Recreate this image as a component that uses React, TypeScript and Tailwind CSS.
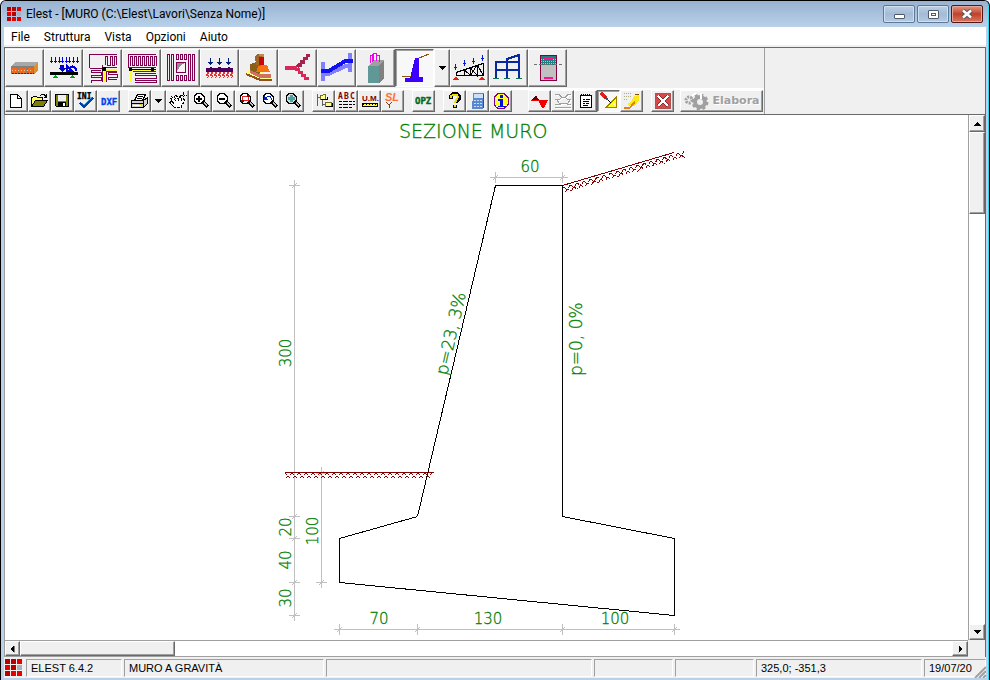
import React from "react";

type P = { children?: React.ReactNode };

/* ---------- icon frames ---------- */
const Big = ({ children }: P) => (
  <svg width="34" height="34" viewBox="0 0 34 34" shapeRendering="crispEdges" fill="none" aria-hidden="true" className="shrink-0">
    {children}
  </svg>
);
const Sm = ({ children }: P) => (
  <svg width="18" height="18" viewBox="0 0 18 18" shapeRendering="crispEdges" fill="none" aria-hidden="true" className="shrink-0">
    {children}
  </svg>
);

const ICON_FONT = "'Liberation Sans', Arial, sans-serif";
const MAROON = "#800050";

/* ---------- structure icons ---------- */
const Brick = () => (
  <Big>
    <path d="M3 15l5-4h22l-4 4z" fill="#a8a8a8" />
    <path d="M3 15h23v8H3z" fill="#808080" />
    <path d="M26 15l4-4v8l-4 4z" fill="#d89030" />
    <path d="M4 17h5v5H4zM11 17h7v5h-7zM20 17h5v5h-5z" fill="#f06818" />
    <path d="M4 22.500h22" stroke="#303060" strokeDasharray="2 1" />
    <path d="M4 19.500h21" stroke="#ffc890" strokeDasharray="1 2" />
  </Big>
);
const Beam = () => (
  <Big>
    {[4, 8, 12, 15, 19, 22, 26, 30].map((x) => (
      <path key={x} d={`M${x}.5 6v6M${x - 1} 10.500h3`} stroke="#0000f0" />
    ))}
    <path d="M13 14h4v3h2l-4 4-4-4h2z" fill="#0000d0" />
    <path d="M20 15v5h5zM22 18c2-4 7-3 7 2" stroke="#0000d0" strokeWidth="2" />
    <path d="M3 21h28v3H3z" fill="#000" />
    <path d="M8 24l3 3H5zM25 24l3 3h-6z" fill="#00a020" />
  </Big>
);
const Solaio1 = () => (
  <Big>
    <path d="M3.500 17V3.500H31M3.500 17.500H16.500V14M19.500 14V5.500h2V14h2.500V5.500h2V14h2.500V5.500h2V14" stroke={MAROON} />
    <path d="M19 5.500h3M24 14.500h-3M24 5.500h3" stroke={MAROON} />
    <path d="M15 19.500H5.500v2H15v3H5.500v2H15v3H5.500v2M31 21.500h-9v2h9v3h-9v2h9" stroke={MAROON} />
    <path d="M31 16.500H16.500V31M31 20.500H20.500V31" stroke={MAROON} />
    <path d="M18.500 31V18.500H31" stroke="#ffff20" strokeWidth="2" />
    <path d="M16 16h4v4h-4z" fill="#000" />
  </Big>
);
const Solaio2 = () => (
  <Big>
    <path d="M3.500 16V3.500H31" stroke={MAROON} />
    <path d="M5.500 14.500V5.500h2v9h2v-9h2v9h2v-9h2v9h2v-9h2v9h2v-9h2v9h2v-9h2v9h2v-9h2v9" stroke={MAROON} />
    <path d="M31 22.500H10.500v2H31v2.500H10.500v2H31v2H10M3 16.500h28M8 20.500h23" stroke={MAROON} />
    <path d="M6 31V18.500h25" stroke="#ffff20" strokeWidth="2" />
    <path d="M6 18.500h25" stroke="#000" />
    <path d="M4 17h3v3H4zM26 17h3v3h-3z" fill="#000" />
  </Big>
);
const Platea = () => (
  <Big>
    <path d="M3.500 3.500h2v26h-2zM7.500 3.500h2v26h-2zM24.500 3.500h2v26h-2zM28.500 3.500h2v26h-2zM12.500 3.500h2v5h-2zM16.500 3.500h2v5h-2zM20.500 3.500h2v5h-2zM12.500 24.500h2v5h-2zM16.500 24.500h2v5h-2zM20.500 24.500h2v5h-2z" stroke={MAROON} />
    <path d="M12.500 11.500h9v10h-9z" fill="#f4f4f4" stroke={MAROON} />
    <path d="M13 20v-8h8l-4 2-2 3z" fill="#909090" />
  </Big>
);
const Winkler = () => (
  <Big>
    <path d="M7.500 7v7M16.500 7v7M25.500 7v7M5 11.500h5M14 11.500h5M23 11.500h5M6 12.500h3M15 12.500h3M24 12.500h3" stroke="#002080" />
    <path d="M3 17h27v4H3zM7 16h2v1H7zM15 16h3v1h-3zM25 16h2v1h-2z" fill="#480060" />
    {[4, 8, 12, 16, 20, 24, 28].map((x) => (
      <path key={x} d={`M${x} 21l2 1-3 2 3 1-2 2`} stroke="#f03030" />
    ))}
  </Big>
);
const Plinto = () => (
  <Big>
    <path d="M4 22l5-6 21 10v4H19z" fill="#ffff90" />
    <path d="M4 22v2l14 6h12v-2H19z" fill="#905020" />
    <path d="M8 19v3l10 5h11v-4H19z" fill="#d07060" />
    <path d="M8 13l7-2 4 9-2 3-9-4z" fill="#886018" />
    <path d="M14 21l3-7h8l3 7z" fill="#f87010" />
    <path d="M13 5l3-2h6v2l-3 3v7l-5-1z" fill="#a06828" />
    <path d="M17 6h5v8h-5z" fill="#c80808" />
    <path d="M17 5V3h5v3z" fill="#b89050" />
  </Big>
);
const Scala = () => (
  <Big>
    <path d="M4 15h12v2h3v3h3v3h3v3h3v3h-5v-3h-3v-3h-3v-3h-3v-1H4z" fill="#d82858" />
    <path d="M15 15l2-3h2V9h3V6h3V3h4v3h-2v3h-3v4h-3v3h-3v2z" fill="#a82050" />
  </Big>
);
const TraveInclinata = () => (
  <Big>
    <path d="M1 11h4v19H1zM28 2h4v19h-4z" fill="#8080ff" />
    <path d="M5 21v4h4l17-8h3v-4h-4L9 21z" fill="#8080ff" />
    <path d="M1 18h7L25 8h8v4h-7L9 22H1z" fill="#1010f0" />
  </Big>
);
const Pilastro = () => (
  <Big>
    <path d="M9 15h11v17H9z" fill="#609898" />
    <path d="M9 15l6-6h10l-5 6z" fill="#a0a0a0" />
    <path d="M20 15l5-6v18l-5 5z" fill="#808080" />
    <path d="M11.500 12V4h2V3M14.500 10V2h3v8M17.500 4h3v7M13.500 5v6" stroke="#f000f0" />
  </Big>
);
const Muro = () => (
  <Big>
    <path d="M17 7h4v19h4v5H7v-4h5z" fill="#3c00ff" />
    <path d="M4 25.500h9M21 7l10-4" stroke="#905010" />
  </Big>
);
const Reticolare = () => (
  <Big>
    <path d="M3 24.500h27M3 21.500L30 12.500v12M3.500 21v4M11.500 25v-6l6 5.500V17l7 8V14l6 11M17 25l7-11" stroke="#000" />
    <path d="M3 25l3 4H0zM29 25l3 4h-6z" fill="#e82010" />
    <path d="M2.500 13v6M11.500 9v6M20.500 7v6M29.500 4v6M1 16.500h3M10 12.500h3M19 10.500h3M28 7.500h3" stroke="#0018e0" />
  </Big>
);
const Telaio = () => (
  <Big>
    <path d="M4 27V11h23M4 19h23M15 27V8L27 4v23" stroke="#0828a0" strokeWidth="2" />
    <path d="M1 27.500h6M12 27.500h6M24 27.500h6" stroke="#107050" />
  </Big>
);
const Sezione = () => (
  <Big>
    <path d="M9.500 4.500h16v25h-16z" fill="#c0c0c0" stroke="#800040" />
    <path d="M10 5h15v9H10z" fill="#208080" />
    <path d="M10 8.500h15M10 10.500h15M10 12.500h15" stroke="#a0d0d0" strokeDasharray="1 1" />
    <path d="M13 7h9v2h-9zM13 26h9v2h-9z" fill="#ff1090" />
    <path d="M3 13.500h30" stroke="#707070" strokeDasharray="3 2" />
  </Big>
);

/* ---------- small icons ---------- */
const Doc = () => (
  <Sm>
    <path d="M2.500 2.500h7l4 4v9h-11z" fill="#fff" stroke="#000" />
    <path d="M9.500 2.500v4h4" stroke="#000" />
  </Sm>
);
const Open = () => (
  <Sm>
    <path d="M.5 14.500v-9h1l1-1h3l1 1h5v3" fill="#ffff60" stroke="#000" />
    <path d="M.5 14.500l4-6h12l-4 6z" fill="#808000" stroke="#000" />
    <path d="M9 3.500l2-1h2l2 2M15.500 2v3h-3" stroke="#000" />
  </Sm>
);
const Save = () => (
  <Sm>
    <path d="M1.500 2.500h13v12h-12l-1-1z" fill="#808000" stroke="#000" />
    <path d="M4 3h8v6H4z" fill="#f0f0f0" />
    <path d="M4 10h8v5H4z" fill="#000" />
    <path d="M9 11h2v3H9z" fill="#fff" />
  </Sm>
);
const Ini = () => (
  <Sm>
    <text x="0" y="7" fontSize="8" fontWeight="700" fill="#000" stroke="#000" strokeWidth=".3" fontFamily="DejaVu Sans Mono, monospace">INI</text>
    <path d="M3 11l4 4 9-9" stroke="#0040a0" strokeWidth="2" />
    <path d="M5 11l2 2 8-8" stroke="#40a0e0" strokeWidth="1" />
  </Sm>
);
const Dxf = () => (
  <Sm>
    <text x="1" y="13" fontSize="9" fontWeight="700" fill="#0040f0" stroke="#0040f0" strokeWidth=".3" fontFamily="DejaVu Sans Mono, monospace">DXF</text>
  </Sm>
);
const Print = () => (
  <Sm>
    <path d="M.5 8.500h12l4-3v6l-4 4H.5z" fill="#d0d0d0" stroke="#000" />
    <path d="M3.500 8.500l3-6h8l-3 6z" fill="#fff" stroke="#000" />
    <path d="M1 11.500h11M7 4.500h5M6 6.500h5M12.500 9v6" stroke="#000" />
    <path d="M2 13h8v1H2z" fill="#fff" />
    <path d="M8 12h2v1H8z" fill="#e0d000" />
  </Sm>
);
const Hand = () => (
  <Sm>
    <path d="M5.500 15.500l-4-4-1-2h2l2 2-3-6 1-1 4 4-1-5h2l2 4 1-3 2 1v3l3-1v2l-3 4v2z" fill="#fff" stroke="#000" strokeDasharray="3 1" />
    <path d="M14.500 0v8M11 3.500h7" stroke="#000" strokeDasharray="3 1 1 1" />
  </Sm>
);
const Lens = ({ children, fill = "#fff" }: P & { fill?: string }) => (
  <Sm>
    <path d="M5 1.500h4l3 3v4l-3 3H5l-3-3v-4z" fill={fill} stroke="#000" />
    {children}
    <path d="M11 10l5 5" stroke="#000" strokeWidth="3" />
    <path d="M12 10.500l3 3" stroke="#c0c0c0" />
  </Sm>
);
const ZoomIn = () => <Lens><path d="M4 6.500h6M7 4v6" stroke="#000" strokeWidth="2" /></Lens>;
const ZoomOut = () => <Lens><path d="M4 7h6" stroke="#000" strokeWidth="2" /></Lens>;
const ZoomWin = () => (
  <Lens>
    <path d="M4.500 4.500h6v4h-6z" stroke="#e02020" />
    <path d="M3 8h3v2H3zM9 3h3v2H9z" fill="#900000" />
  </Lens>
);
const ZoomPrev = () => (
  <Lens>
    <path d="M5 6l2-2h2l2 4" stroke="#0020b0" />
    <path d="M3 4v4h4z" fill="#0020b0" />
  </Lens>
);
const ZoomAll = () => <Lens fill="#d0e0e0"><path d="M7 3v7M3.500 6.500h7" stroke="#50a0a0" strokeWidth="3" /></Lens>;
const Tree = () => (
  <Sm>
    <path d="M2.500 2v12M2 5.500h4M7.500 8v6M8 12.500h3" stroke="#606060" />
    <path d="M5.500 3.500h2l1-1h2v5h-5zM10.500 10.500h6v4h-6z" fill="#ffff90" stroke="#707010" />
    <path d="M6 7.500h6v-3M11 14.500h6v-4" stroke="#000" />
  </Sm>
);
const Abc = () => (
  <Sm>
    {["A", "B", "C"].map((c, i) => (
      <text key={c} x={i * 6} y="7" fontSize="8" fontWeight="700" fill="#800000" fontFamily="DejaVu Sans Mono, monospace">{c}</text>
    ))}
    <path d="M1 9.500h16M1 12.500h16M1 15.500h14" stroke="#000" strokeDasharray="3 1 5 1" />
  </Sm>
);
const Um = () => (
  <Sm>
    <text x="1" y="9" fontSize="8" fontWeight="700" fill="#800000" fontFamily={ICON_FONT}>U.M.</text>
    <path d="M1.500 11.500h15v3h-15z" fill="#ffff20" stroke="#000" />
    <path d="M2 12.500h14" stroke="#000" strokeDasharray="1 2" />
  </Sm>
);
const Sl = () => (
  <Sm>
    <text x="1" y="9" fontSize="11" fontWeight="700" fontStyle="italic" fill="#ff7038" fontFamily={ICON_FONT}>SL</text>
    <path d="M2 10l3 3 3-3M5 13v3" stroke="#804020" />
  </Sm>
);
const Opz = () => (
  <Sm>
    <text x="0" y="12" fontSize="9" fontWeight="700" fill="#006820" fontFamily="DejaVu Sans Mono, monospace" stroke="#006820" strokeWidth=".4">OPZ</text>
  </Sm>
);
const Help = () => (
  <Sm>
    <path d="M5 7V4l2-2h4l2 2v3l-3 3v1M9 13v3" stroke="#000" strokeWidth="4" />
    <path d="M5 6V4l2-1h4l1 2-1 2-2 3v1M9 13v2" stroke="#f0e000" strokeWidth="2" />
  </Sm>
);
const Calc = () => (
  <Sm>
    <path d="M4 1h11v15l-2 1H3z" fill="#5888d0" />
    <path d="M5 2h9v4H5z" fill="#c8e0f8" />
    <path d="M5 8.500h8M5 11.500h8M5 14.500h8" stroke="#c8dcf4" strokeDasharray="2 1" />
    <path d="M14.500 2v14" stroke="#2850a0" />
  </Sm>
);
const Info = () => (
  <Sm>
    <path d="M6 1.500h6l4 4v7l-4 4H6l-4-4v-7z" fill="#ffff20" stroke="#800080" />
    <path d="M5 3h7M3 6h3M12 13h3M4 14h3" stroke="#fff" />
    <path d="M8 3h3v3H8zM6 7h5v7h2v1H6v-1h2V9H6z" fill="#0010e0" />
  </Sm>
);
const Diagram = () => (
  <Sm>
    <path d="M1 8l4-5 3 5z" fill="#600000" />
    <path d="M7 8h10l-4 8h-2z" fill="#f00000" />
    <path d="M0 8.500h17" stroke="#f00000" />
  </Sm>
);
const Curves = () => {
  const d = "M1 2.500h4l3 3h3l3-3h3M1 7.500h4l3-2h3l3 2h3M1 15.500h16M3 8l2 3h9l2-3M1 12.500h5l2-1h4l2 1h3";
  return (
    <Sm>
      <path d={d} stroke="#fff" transform="translate(1 1)" />
      <path d={d} stroke="#a0a0a0" />
    </Sm>
  );
};
const Notes = () => (
  <Sm>
    <path d="M3.500 3.500h11v12h-11z" fill="#fff" stroke="#000" />
    <path d="M4 2.500h10" stroke="#000" strokeWidth="2" strokeDasharray="1 1" />
    <path d="M6 7.500h2M9 7.500h4M6 9.500h6M6 11.500h2M9 11.500h3M6 13.500h5" stroke="#000" />
  </Sm>
);
const Draw = () => (
  <Sm>
    <path d="M16.500 5v10.500H6z" fill="#ffff20" stroke="#a08000" />
    <path d="M12 13h3v-3z" fill="#fff" />
    <path d="M1 1l5 5" stroke="#e02020" strokeWidth="3" />
    <path d="M5 5l3 3" stroke="#206060" strokeWidth="2" />
    <path d="M8 8l3 3" stroke="#000" />
  </Sm>
);
const Sweep = () => (
  <Sm>
    <path d="M1 1.500h7M1 4.500h7M1 7.500h4" stroke="#b0b080" strokeDasharray="1 1" />
    <path d="M16 3v5l-3 5-5 2-4-3 4-2 3-6z" fill="#ffe818" />
    <path d="M1 15.500h6l2-2 3-4" stroke="#e08020" strokeWidth="2" />
    <path d="M12 3l4-1" stroke="#805000" />
  </Sm>
);
const Cancel = () => (
  <Sm>
    <path d="M1.500 1.500h15v15h-15z" fill="#d84848" stroke="#b05050" />
    <path d="M4 4l10 10M14 4L4 14" stroke="#803030" strokeWidth="4" />
    <path d="M4 4l10 10M14 4L4 14" stroke="#fff" strokeWidth="2" />
  </Sm>
);
const Caret = () => (
  <svg width="7" height="4" viewBox="0 0 7 4" aria-hidden="true" shapeRendering="crispEdges">
    <path d="M0 0h7L3.500 4z" fill="#000" />
  </svg>
);
const Logo = ({ size }: { size: number }) => (
  <svg width={size} height={size} viewBox="0 0 15 15" shapeRendering="crispEdges" aria-hidden="true" className="shrink-0">
    <path d="M0 0h4v4H0zM5 5h4v4H5zM0 10h4v4H0zM5 0h4v4H5z" fill="#b80000" />
    <path d="M0 5h4v4H0zM10 0h4v4h-4zM5 10h4v4H5zM10 10h4v4h-4z" fill="#e80000" />
    <path d="M10 5h4v4h-4z" fill="#a8b0c0" />
  </svg>
);

/* ---------- controls ---------- */
const RAISED =
  "flex items-center justify-center border border-t-white border-l-white border-r-[#696969] border-b-[#696969] bg-[#f0f0f0] shadow-[inset_-1px_-1px_0_#a0a0a0]";
const PRESSED =
  "flex items-center justify-center border border-t-[#696969] border-l-[#696969] border-r-white border-b-white bg-[#f8f8f8] shadow-[inset_1px_1px_0_#a0a0a0]";

const BigButton = ({ label, pressed, children }: P & { label: string; pressed?: boolean }) => (
  <button type="button" aria-label={label} aria-pressed={pressed} className={`${pressed ? PRESSED : RAISED} h-[38px] w-[39px] shrink-0`}>
    {children}
  </button>
);
const SmallButton = ({ label, pressed, children }: P & { label: string; pressed?: boolean }) => (
  <button type="button" aria-label={label} aria-pressed={pressed} className={`${pressed ? PRESSED : RAISED} h-[22px] w-[23px] shrink-0`}>
    {children}
  </button>
);
const Gap = () => <div className="w-2 shrink-0" />;

const Cell = ({ className, children }: P & { className: string }) => (
  <div className={`${className} h-[18px] border border-t-[#a0a0a0] border-l-[#a0a0a0] border-r-white border-b-white px-1 leading-4 whitespace-nowrap`}>
    {children}
  </div>
);

/* ---------- drawing ---------- */
const Hatch = ({ count }: { count: number }) => (
  <g stroke="#800000">
    {Array.from({ length: count }, (_, i) => i * 7).map((x) => (
      <path key={x} d={`M${x} 1l6 6M${x + 7} 1l-3 3M${x + 3} 4l-3 3`} strokeDasharray="3 1" />
    ))}
  </g>
);
const Tick = ({ x, y }: { x: number; y: number }) => (
  <path d={`M${x - 5} ${y}.5h11M${x}.5 ${y - 5}v11M${x - 2} ${y + 3}l5 -5`} />
);

const Drawing = () => (
  <svg className="block h-full w-full" role="img" aria-label="Sezione muro" fill="none">
    <g transform="translate(-5 -115)" shapeRendering="crispEdges">
      <g stroke="#c0c0c0">
        <path d="M294.500 181v440M321.500 467v120M490 177.500h78M334 629.500h346" />
        {[185, 516, 538, 582, 615].map((y) => <Tick key={y} x={294} y={y} />)}
        {[473, 582].map((y) => <Tick key={y} x={321} y={y} />)}
        {[495, 562].map((x) => <Tick key={x} x={x} y={177} />)}
        {[339, 417, 562, 674].map((x) => <Tick key={x} x={x} y={629} />)}
      </g>
      <path d="M285 472.500h149" stroke="#800000" />
      <g transform="translate(285 472)"><Hatch count={21} /></g>
      <path d="M562.500 185.500L674 152.500" stroke="#800000" />
      <g transform="translate(563 186) rotate(-16.500)"><Hatch count={18} /></g>
      <path d="M495.500 185.500h67v331l112 22v77l-335-33v-44l78-22z" stroke="#000" />
      <g fill="#008000" stroke="#008000" strokeWidth=".3" fontFamily="'DejaVu Sans', sans-serif" fontWeight="200">
        <text x="399" y="138" fontSize="19">SEZIONE MURO</text>
        <g fontSize="15" textAnchor="middle">
          <text x="530" y="172">60</text>
          <text x="379" y="624">70</text>
          <text x="488" y="624">130</text>
          <text x="615" y="624">100</text>
          <text transform="translate(291 353) rotate(-90)">300</text>
          <text transform="translate(291 527) rotate(-90)">20</text>
          <text transform="translate(291 560) rotate(-90)">40</text>
          <text transform="translate(291 598) rotate(-90)">30</text>
          <text transform="translate(318 531) rotate(-90)">100</text>
        </g>
        <g fontSize="17">
          <text transform="translate(447 376) rotate(-77)">p=23, 3%</text>
          <text transform="translate(582 376) rotate(-90)">p=0, 0%</text>
        </g>
      </g>
    </g>
  </svg>
);

const WIN =
  "flex h-[18px] w-8 items-center justify-center rounded-[2px] border border-[#5f7896] bg-linear-to-b from-[#bdd0e5] via-[#a3bbd6] to-[#b3cbe5] shadow-[inset_0_0_0_1px_#d0e0f0]";

export default function App() {
  return (
    <div className="flex h-screen flex-col overflow-hidden rounded-t-md border-x border-t border-black bg-[#b9d1ea] px-[3px] pb-[2px] font-[Roboto,'Open_Sans',sans-serif] text-xs text-black shadow-[inset_-1px_0_0_#30d8f0]">
      {/* title bar */}
      <header className="-mx-[2px] flex h-[26px] shrink-0 items-center bg-linear-to-b from-[#98b2d0] to-[#b9d1ea] px-[5px]">
        <Logo size={15} />
        <h1 className="ml-1 flex-1 truncate">Elest - [MURO (C:\Elest\Lavori\Senza Nome)]</h1>
        <div className="flex gap-[2px]">
          <button type="button" aria-label="Riduci a icona" className={WIN}>
            <span className="mt-1 h-[5px] w-[11px] rounded-[1px] border border-[#505a68] bg-white" />
          </button>
          <button type="button" aria-label="Ingrandisci" className={WIN}>
            <span className="flex h-[9px] w-[11px] items-center justify-center rounded-[1px] border border-[#505a68] bg-white">
              <span className="h-[3px] w-[5px] border border-[#505a68]" />
            </span>
          </button>
          <button type="button" aria-label="Chiudi" className="flex h-[18px] w-8 items-center justify-center rounded-[2px] border border-[#501818] bg-linear-to-b from-[#e09888] via-[#c04028] to-[#d87860] shadow-[inset_0_0_0_1px_#e8a898]">
            <svg width="12" height="10" viewBox="0 0 12 10" aria-hidden="true">
              <path d="M2 1.500l8 7M10 1.500l-8 7" stroke="#505868" strokeWidth="4.500" />
              <path d="M2 1.500l8 7M10 1.500l-8 7" stroke="#fff" strokeWidth="2.500" />
            </svg>
          </button>
        </div>
      </header>

      {/* menu */}
      <nav className="flex h-5 shrink-0 items-end border-b-2 border-[#f0f0f0] bg-white pl-[7px]">
        <div className="flex gap-[14px]">
          {["File", "Struttura", "Vista", "Opzioni", "Aiuto"].map((m) => (
            <button key={m} type="button" className="leading-4">{m}</button>
          ))}
        </div>
      </nav>

      {/* toolbars */}
      <div className="flex h-[68px] shrink-0 border border-[#696969] bg-[#f0f0f0]">
        <div className="flex flex-col border-r border-[#a0a0a0] pt-px">
          <div className="flex border-b-2 border-white pb-px">
            <BigButton label="Solaio"><Brick /></BigButton>
            <BigButton label="Trave continua"><Beam /></BigButton>
            <BigButton label="Solaio d'angolo"><Solaio1 /></BigButton>
            <BigButton label="Solaio continuo"><Solaio2 /></BigButton>
            <BigButton label="Piastra"><Platea /></BigButton>
            <BigButton label="Trave Winkler"><Winkler /></BigButton>
            <BigButton label="Plinto"><Plinto /></BigButton>
            <BigButton label="Scala"><Scala /></BigButton>
            <BigButton label="Trave inclinata"><TraveInclinata /></BigButton>
            <BigButton label="Pilastro"><Pilastro /></BigButton>
            <BigButton label="Muro" pressed><Muro /></BigButton>
            <button type="button" aria-label="Tipi di muro" className={`${RAISED} h-[38px] w-4`}><Caret /></button>
            <BigButton label="Reticolare"><Reticolare /></BigButton>
            <BigButton label="Telaio"><Telaio /></BigButton>
            <BigButton label="Sezione"><Sezione /></BigButton>
          </div>
          <div className="flex">
            <SmallButton label="Nuovo"><Doc /></SmallButton>
            <SmallButton label="Apri"><Open /></SmallButton>
            <SmallButton label="Salva"><Save /></SmallButton>
            <SmallButton label="Inizializza"><Ini /></SmallButton>
            <SmallButton label="Esporta DXF"><Dxf /></SmallButton>
            <Gap />
            <SmallButton label="Stampa"><Print /></SmallButton>
            <button type="button" aria-label="Opzioni di stampa" className={`${RAISED} h-[22px] w-[15px]`}><Caret /></button>
            <SmallButton label="Sposta"><Hand /></SmallButton>
            <SmallButton label="Zoom avanti"><ZoomIn /></SmallButton>
            <SmallButton label="Zoom indietro"><ZoomOut /></SmallButton>
            <SmallButton label="Zoom finestra"><ZoomWin /></SmallButton>
            <SmallButton label="Zoom precedente"><ZoomPrev /></SmallButton>
            <SmallButton label="Zoom tutto"><ZoomAll /></SmallButton>
            <Gap />
            <SmallButton label="Struttura dati"><Tree /></SmallButton>
            <SmallButton label="Testi"><Abc /></SmallButton>
            <SmallButton label="Unità di misura"><Um /></SmallButton>
            <SmallButton label="Stati limite"><Sl /></SmallButton>
            <Gap />
            <SmallButton label="Opzioni"><Opz /></SmallButton>
            <Gap />
            <SmallButton label="Guida"><Help /></SmallButton>
            <SmallButton label="Calcolatrice"><Calc /></SmallButton>
            <SmallButton label="Informazioni"><Info /></SmallButton>
            <div className="w-4" />
            <SmallButton label="Diagrammi"><Diagram /></SmallButton>
            <SmallButton label="Inviluppi"><Curves /></SmallButton>
            <SmallButton label="Relazione"><Notes /></SmallButton>
            <SmallButton label="Disegno" pressed><Draw /></SmallButton>
            <SmallButton label="Pulisci"><Sweep /></SmallButton>
            <Gap />
            <SmallButton label="Annulla"><Cancel /></SmallButton>
            <div className="w-[6px]" />
            <button type="button" className={`${RAISED} mr-px h-[22px] w-[83px] gap-1 font-['DejaVu_Sans',sans-serif] text-[11px] font-bold text-[#a0a0a0] [text-shadow:1px_1px_0_#fff]`}>
              <svg width="25" height="18" viewBox="0 0 25 18" aria-hidden="true" fill="none" className="shrink-0">
                <circle cx="16" cy="10" r="5" stroke="#a0a0a0" strokeWidth="4" />
                <circle cx="16" cy="10" r="7" stroke="#a0a0a0" strokeWidth="3" strokeDasharray="3 2.500" />
                <circle cx="5" cy="8" r="3" stroke="#a0a0a0" strokeWidth="3" strokeDasharray="2 1" />
                <path d="M8 4l4-3M17 1v6" stroke="#fff" strokeWidth="2" />
              </svg>
              Elabora
            </button>
          </div>
        </div>
      </div>

      {/* canvas with scroll bars */}
      <main className="flex min-h-0 flex-1 flex-col border-x border-[#696969] border-l-[#a0a0a0] bg-white">
        <div className="flex min-h-0 flex-1">
          <div className="min-w-0 flex-1 overflow-hidden bg-white"><Drawing /></div>
          <div className="flex w-[17px] shrink-0 flex-col border-l border-[#a0a0a0]">
            <button type="button" aria-label="Scorri su" className={`${RAISED} h-[17px]`}>
              <span className="rotate-180"><Caret /></span>
            </button>
            <div className={`${RAISED} h-[82px]`} />
            <div className="flex-1" />
            <button type="button" aria-label="Scorri giù" className={`${RAISED} h-4`}><Caret /></button>
          </div>
        </div>
        <div className="flex h-[17px] shrink-0 bg-[#f0f0f0]">
          <div className="flex flex-1 border-y border-[#a0a0a0] bg-white">
            <button type="button" aria-label="Scorri a sinistra" className={`${RAISED} w-[15px]`}>
              <span className="rotate-90"><Caret /></span>
            </button>
            <div className={`${RAISED} w-[155px]`} />
            <div className="flex-1" />
            <button type="button" aria-label="Scorri a destra" className={`${RAISED} w-4`}>
              <span className="-rotate-90"><Caret /></span>
            </button>
          </div>
          <div className="w-[17px]" />
        </div>
      </main>

      {/* status bar */}
      <footer className="relative flex h-[21px] shrink-0 items-center gap-[2px] bg-[#f0f0f0] font-['Liberation_Sans',Arial,sans-serif] text-[11px]">
        <div className="w-5 pl-px"><Logo size={18} /></div>
        <Cell className="w-24">ELEST 6.4.2</Cell>
        <Cell className="w-[200px]">MURO A GRAVITÀ</Cell>
        <Cell className="min-w-0 flex-1" />
        <Cell className="w-[79px]" />
        <Cell className="w-[79px]" />
        <Cell className="w-[166px]">325,0; -351,3</Cell>
        <Cell className="w-[62px]">19/07/20</Cell>
        <svg className="absolute right-0 bottom-0" width="12" height="12" viewBox="0 0 12 12" aria-hidden="true">
          <path d="M1 12L12 1M5 12l7-7M9 12l3-3" stroke="#a0a0a0" strokeWidth="2" />
        </svg>
      </footer>
    </div>
  );
}
